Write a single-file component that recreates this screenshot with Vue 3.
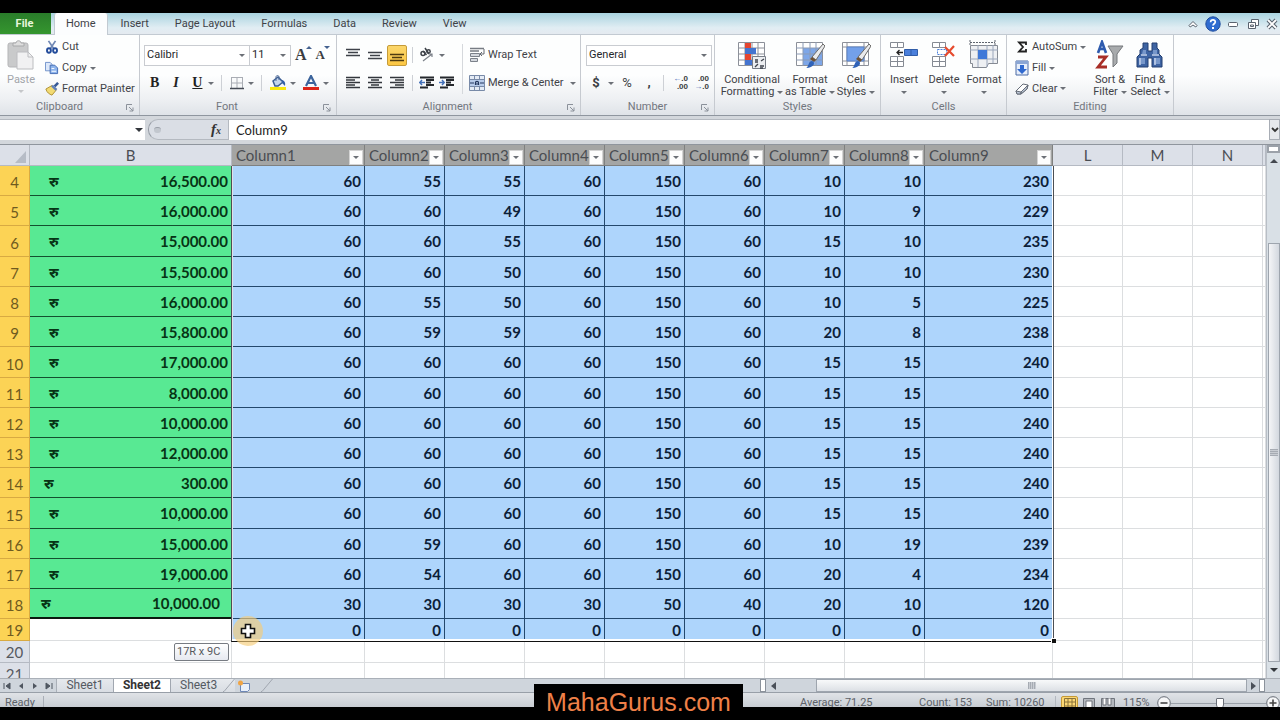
<script setup>
import { ref } from 'vue'

const tabs = ['Home', 'Insert', 'Page Layout', 'Formulas', 'Data', 'Review', 'View']
const tableColumns = [1, 2, 3, 4, 5, 6, 7, 8, 9].map((n) => 'Column' + n)
const emptyColumns = ['L', 'M', 'N']

const rows = [
  { n: 4, amount: '16,500.00', v: [60, 55, 55, 60, 150, 60, 10, 10, 230] },
  { n: 5, amount: '16,000.00', v: [60, 60, 49, 60, 150, 60, 10, 9, 229] },
  { n: 6, amount: '15,000.00', v: [60, 60, 55, 60, 150, 60, 15, 10, 235], tall: true },
  { n: 7, amount: '15,500.00', v: [60, 60, 50, 60, 150, 60, 10, 10, 230] },
  { n: 8, amount: '16,000.00', v: [60, 55, 50, 60, 150, 60, 10, 5, 225] },
  { n: 9, amount: '15,800.00', v: [60, 59, 59, 60, 150, 60, 20, 8, 238] },
  { n: 10, amount: '17,000.00', v: [60, 60, 60, 60, 150, 60, 15, 15, 240], tall: true },
  { n: 11, amount: '8,000.00', v: [60, 60, 60, 60, 150, 60, 15, 15, 240] },
  { n: 12, amount: '10,000.00', v: [60, 60, 60, 60, 150, 60, 15, 15, 240] },
  { n: 13, amount: '12,000.00', v: [60, 60, 60, 60, 150, 60, 15, 15, 240] },
  { n: 14, amount: '300.00', v: [60, 60, 60, 60, 150, 60, 15, 15, 240], money: 'near' },
  { n: 15, amount: '10,000.00', v: [60, 60, 60, 60, 150, 60, 15, 15, 240], tall: true },
  { n: 16, amount: '15,000.00', v: [60, 59, 60, 60, 150, 60, 10, 19, 239] },
  { n: 17, amount: '19,000.00', v: [60, 54, 60, 60, 150, 60, 20, 4, 234] },
  { n: 18, amount: '10,000.00', v: [30, 30, 30, 30, 50, 40, 20, 10, 120], money: 'inset' },
  { n: 19, amount: '', v: [0, 0, 0, 0, 0, 0, 0, 0, 0], short: true },
]

const nameBox = ref('')
const formula = ref('Column9')
const zoom = ref(52)
</script>

<template>
  <div class="screen">
    <div class="window">
      <nav class="tabs">
        <button class="file">File</button>
        <button v-for="(t, i) in tabs" :key="t" class="tab" :class="{ active: i === 0 }">{{ t }}</button>
        <span class="grow"></span>
        <button class="win" aria-label="Minimize ribbon">
          <svg width="12" height="12" viewBox="0 0 12 12"><path d="M2 7.500 6 3.500l4 4-1.200 1.500L6 7 3.200 9z" fill="#fff" stroke="#59636f" /></svg>
        </button>
        <button class="win" aria-label="Help">
          <svg width="16" height="16" viewBox="0 0 16 16"><circle cx="8" cy="8" r="7.200" fill="#2f6cd0" stroke="#1e4c9c" /><path d="M5.600 6.200C5.700 3.200 10.400 3.300 10.300 6 10.200 7.700 8 7.800 8 9.600" fill="none" stroke="#fff" stroke-width="1.700" /><rect x="7" y="11" width="2" height="2" fill="#fff" /></svg>
        </button>
        <button class="win" aria-label="Minimize">
          <svg width="12" height="12" viewBox="0 0 12 12"><rect x="1.500" y="4.500" width="9" height="4" rx="1" fill="#fff" stroke="#59636f" /></svg>
        </button>
        <button class="win" aria-label="Restore">
          <svg width="13" height="12" viewBox="0 0 13 12"><path d="M4.500 1.500h7v6h-7z" fill="#fff" stroke="#59636f" /><path d="M1.500 4.500h7v6h-7z" fill="#fff" stroke="#59636f" /><path d="M3.500 7h3v1.500h-3z" fill="none" stroke="#59636f" /></svg>
        </button>
        <button class="win" aria-label="Close">
          <svg width="12" height="12" viewBox="0 0 12 12"><path d="m2 2 8 8M10 2 2 10" stroke="#59636f" stroke-width="4" /><path d="m2 2 8 8M10 2 2 10" stroke="#fff" stroke-width="1.800" /></svg>
        </button>
      </nav>

      <div class="ribbon">
        <section class="group clipboard">
          <div class="tools">
            <button class="big disabled">
              <svg width="28" height="30" viewBox="0 0 28 30"><rect x="1" y="3" width="20" height="24" rx="2" fill="#c9cacb" stroke="#b4b5b7" /><path d="M6 6V3h3c0-3 5-3 5 0h3v3z" fill="#dedede" stroke="#a7a8aa" /><path d="M10 12h11l5 5v12H10z" fill="#f1f1f2" stroke="#bcbdc0" /><path d="M21 12v5h5" fill="none" stroke="#bcbdc0" /></svg>
              <span>Paste</span><i class="caret"></i>
            </button>
            <div class="stack">
              <button class="small"><svg width="14" height="14" viewBox="0 0 16 16"><path d="M4 1l6 9M12 1 6 10" stroke="#7189b5" stroke-width="2" /><ellipse cx="4.500" cy="12" rx="2.200" ry="2.500" fill="none" stroke="#234c9b" stroke-width="2.200" /><ellipse cx="11.500" cy="12" rx="2.200" ry="2.500" fill="none" stroke="#234c9b" stroke-width="2.200" /></svg>Cut</button>
              <button class="small"><svg width="14" height="14" viewBox="0 0 15 15"><path d="M.5 1.500h5l2 2v7h-7z" fill="#dce8fa" stroke="#6d8fc8" /><path d="M5.500 4.500h5l3 3v6h-8z" fill="#8db4ec" stroke="#3f68b0" /><path d="M7 8h3M7 11h5" stroke="#fff" /></svg>Copy<i class="caret"></i></button>
              <button class="small"><svg width="14" height="14" viewBox="0 0 16 16"><path d="m1 8 7-4 5 5-5 6C5 14 2 12 1 8z" fill="#f2da72" stroke="#a98a2b" /><path d="m7 5 2-2 5 5-2 2z" fill="#5f7fb8" /><path d="m11 5 4-4" stroke="#375996" stroke-width="3" /></svg>Format Painter</button>
            </div>
          </div>
          <footer>Clipboard<svg class="launch" width="8" height="8" viewBox="0 0 8 8"><path d="M.5 6V.5H6M3 3l4 4M7 3.500V7H3.500" fill="none" stroke="#8b919a" /></svg></footer>
        </section>

        <section class="group font">
          <div class="tools rows">
            <div class="line">
              <label class="pick name"><select aria-label="Font"><option>Calibri</option></select><i class="caret"></i></label>
              <label class="pick size"><select aria-label="Font size"><option>11</option></select><i class="caret"></i></label>
              <button class="letter grow-font">A<i class="up"></i></button>
              <button class="letter shrink-font">A<i class="caret blue"></i></button>
            </div>
            <div class="line marks">
              <button class="glyph"><b>B</b></button>
              <button class="glyph"><em>I</em></button>
              <button class="glyph"><u>U</u></button><i class="caret"></i>
              <span class="bar"></span>
              <button class="icon" aria-label="Borders"><svg width="14" height="14" viewBox="0 0 14 14"><path d="M1.500 1v11M12.500 1v11M7 1v11M1 1.500h12M1 7h12" stroke="#a9adb4" /><path d="M0 12.500h14" stroke="#454b55" stroke-width="1.500" /></svg></button><i class="caret"></i>
              <span class="bar"></span>
              <button class="icon" aria-label="Fill color"><svg width="16" height="16" viewBox="0 0 16 16"><path d="m3 6 5-4 5 5-5 4H5z" fill="#c3d5ee" stroke="#3b5e94" stroke-width="1.500" /><path d="M6 6V2c0-2 3-2 3 0v3" fill="none" stroke="#526d97" /><path d="M12 5q4 1 3 6l-3-3z" fill="#3460a6" /><path d="M0 12h16v3H0z" fill="#f8e80e" /></svg></button><i class="caret"></i>
              <button class="icon" aria-label="Font color"><svg width="16" height="16" viewBox="0 0 16 16"><path d="M3 11 8 1l5 10M5 8h6" fill="none" stroke="#3c649c" stroke-width="2.200" /><path d="M0 12h16v3H0z" fill="#dc2418" /></svg></button><i class="caret"></i>
            </div>
          </div>
          <footer>Font<svg class="launch" width="8" height="8" viewBox="0 0 8 8"><path d="M.5 6V.5H6M3 3l4 4M7 3.500V7H3.500" fill="none" stroke="#8b919a" /></svg></footer>
        </section>

        <section class="group align">
          <div class="tools">
            <div class="rows left">
              <div class="line">
                <button class="sq" aria-label="Top align"><svg width="14" height="14" viewBox="0 0 14 14"><path d="M0 1.500h14M2 4.500h10M0 7.500h14" stroke="#3e4249" stroke-width="1.600" /></svg></button>
                <button class="sq" aria-label="Middle align"><svg width="14" height="14" viewBox="0 0 14 14"><path d="M0 4.500h14M2 7.500h10M0 10.500h14" stroke="#3e4249" stroke-width="1.600" /></svg></button>
                <button class="sq on" aria-label="Bottom align"><svg width="14" height="14" viewBox="0 0 14 14"><path d="M0 6.500h14M2 9.500h10M0 12.500h14" stroke="#4f3b10" stroke-width="1.600" /></svg></button>
                <span class="bar"></span>
                <button class="icon" aria-label="Orientation"><svg width="16" height="16" viewBox="0 0 16 16"><g fill="none" stroke="#3e4249" stroke-width="1.500"><circle cx="4" cy="6.500" r="2" /><path d="M4 4l3.500 4M6 1l4 6" /><circle cx="9.500" cy="4.500" r="1.700" /><path d="m4 14 9-7M13 10V7h-3" stroke="#7d828a" stroke-width="1.200" /></g></svg></button><i class="caret"></i>
              </div>
              <div class="line">
                <button class="sq" aria-label="Align left"><svg width="14" height="14" viewBox="0 0 14 14"><path d="M0 1.500h14M0 4h9M0 6.500h14M0 9h9M0 11.500h14" stroke="#33373d" stroke-width="1.500" /></svg></button>
                <button class="sq" aria-label="Center"><svg width="14" height="14" viewBox="0 0 14 14"><path d="M0 1.500h14M3 4h8M0 6.500h14M3 9h8M0 11.500h14" stroke="#33373d" stroke-width="1.500" /></svg></button>
                <button class="sq" aria-label="Align right"><svg width="14" height="14" viewBox="0 0 14 14"><path d="M0 1.500h14M5 4h9M0 6.500h14M5 9h9M0 11.500h14" stroke="#33373d" stroke-width="1.500" /></svg></button>
                <span class="bar"></span>
                <button class="icon" aria-label="Decrease indent"><svg width="16" height="14" viewBox="0 0 16 14"><path d="M1 1.500h14M7 4h8M7 6.500h5M7 9h8M1 11.500h8" stroke="#25282d" stroke-width="1.800" /><path d="M6 6.500H1M3 4 .8 6.500 3 9" fill="none" stroke="#4370b8" stroke-width="1.500" /></svg></button>
                <button class="icon" aria-label="Increase indent"><svg width="16" height="14" viewBox="0 0 16 14"><path d="M1 1.500h14M7 4h8M7 6.500h5M7 9h8M1 11.500h8" stroke="#25282d" stroke-width="1.800" /><path d="M0 6.500h5M3 4l2.200 2.500L3 9" fill="none" stroke="#4370b8" stroke-width="1.500" /></svg></button>
              </div>
            </div>
            <div class="rows right">
              <button class="small line"><svg width="16" height="16" viewBox="0 0 16 16"><path d="M1 1.500h14M1 4h9" stroke="#777c84" stroke-width="1.500" /><path d="M1.500 6.500h9v3h-9zM1.500 11.500h7v3h-7z" fill="#d4d8de" stroke="#7b818a" /><path d="M15 2v5h-4M13 5l-2 2 2 2" fill="none" stroke="#62676f" /></svg>Wrap Text</button>
              <button class="small line"><svg width="16" height="16" viewBox="0 0 16 16"><path d="M.5.500h15v15H.5z" fill="#e4ebf5" stroke="#788aa8" /><path d="M.5 4.500h15M.5 11.500h15M5.500 0v5M10.500 0v5M5.500 11v5M10.500 11v5" stroke="#788aa8" /><path d="M1 5h14v6H1z" fill="#b7cbea" /><path d="M1 8h4M11 8h4M6.500 10V7.500C6.500 6 9.500 6 9.500 7.500V10M6.500 9h3" fill="none" stroke="#23375e" stroke-width="1.200" /></svg>Merge &amp; Center<i class="caret"></i></button>
            </div>
          </div>
          <footer>Alignment<svg class="launch" width="8" height="8" viewBox="0 0 8 8"><path d="M.5 6V.5H6M3 3l4 4M7 3.500V7H3.500" fill="none" stroke="#8b919a" /></svg></footer>
        </section>

        <section class="group number">
          <div class="tools rows">
            <div class="line"><label class="pick wide"><select aria-label="Number format"><option>General</option></select><i class="caret"></i></label></div>
            <div class="line">
              <button class="sign"><b>$</b></button><i class="caret"></i>
              <button class="sign">%</button>
              <button class="sign comma"><b>,</b></button>
              <span class="bar"></span>
              <button class="decimals"><span><i>←</i>.0</span><span>.00</span></button>
              <button class="decimals"><span>.00</span><span><i>→</i>.0</span></button>
            </div>
          </div>
          <footer>Number<svg class="launch" width="8" height="8" viewBox="0 0 8 8"><path d="M.5 6V.5H6M3 3l4 4M7 3.500V7H3.500" fill="none" stroke="#8b919a" /></svg></footer>
        </section>

        <section class="group styles">
          <div class="tools">
            <button class="big">
              <svg width="30" height="30" viewBox="0 0 30 30"><path d="M1.500 2.500h26v23h-26z" fill="#fff" stroke="#8c9099" /><path d="M1 8h27M1 14h27M1 20h27M8 2v24M15 2v24M21 2v24" stroke="#8c9099" /><path d="M8 3h6v5H8zM8 14h6v6H8z" fill="#e5452f" /><path d="M8 8h11v6H8zM8 20h9v5H8z" fill="#4474cf" /><path d="M15.500 16.500h13v12h-13z" fill="#eceef1" stroke="#777d87" /><path d="M18 20h3M18 22h3M23 26h4M23 28h3M24 21l3-2M18 27l3-3" stroke="#3e434c" stroke-width="1.300" /></svg>
              <span>Conditional</span><span>Formatting<i class="caret"></i></span>
            </button>
            <button class="big">
              <svg width="30" height="30" viewBox="0 0 30 30"><path d="M1.500 2.500h26v23h-26z" fill="#fff" stroke="#8c9099" /><path d="M8 8h19v17H8z" fill="#7da6e8" /><path d="M1 8h27M1 14h27M1 20h27M8 2v24M15 2v24M21 2v24" stroke="#8c9bb4" /><path d="m28 4 2 2-9 14-4-3z" fill="#e9eaec" stroke="#6b6a68" /><path d="m17 17 4 3-2 2-4-3z" fill="#6f5132" /><path d="M11 28c3-1 2-7 6-7 4 1 2 7-6 7z" fill="#2f62b8" /></svg>
              <span>Format</span><span>as Table<i class="caret"></i></span>
            </button>
            <button class="big">
              <svg width="30" height="30" viewBox="0 0 30 30"><path d="M1.500 2.500h26v23h-26z" fill="#fff" stroke="#8c9099" /><path d="M1 7h27M1 21h27M6 2v24M23 2v24" stroke="#8c9099" /><path d="M6 7h17v14H6z" fill="#73a0ea" stroke="#5c83c6" /><path d="m28 4 2 2-9 14-4-3z" fill="#e9eaec" stroke="#6b6a68" /><path d="m17 17 4 3-2 2-4-3z" fill="#6f5132" /><path d="M11 28c3-1 2-7 6-7 4 1 2 7-6 7z" fill="#2f62b8" /></svg>
              <span>Cell</span><span>Styles<i class="caret"></i></span>
            </button>
          </div>
          <footer>Styles</footer>
        </section>

        <section class="group cells">
          <div class="tools">
            <button class="big">
              <svg width="30" height="30" viewBox="0 0 30 30"><g fill="#fff" stroke="#858a93"><path d="M1.500 2.500h7v5h-7zM8.500 2.500h6v5h-6zM1.500 16.500h7v5h-7zM8.500 16.500h6v5h-6zM1.500 21.500h7v5h-7zM8.500 21.500h6v5h-6z" /></g><path d="M15.500 9.500h13v6h-13z" fill="#4b80dc" stroke="#315da8" /><path d="M22 9v7" stroke="#315da8" /><path d="M14 12.500H8M10.500 10 8 12.500l2.500 2.500" fill="none" stroke="#222" stroke-width="1.300" /></svg>
              <span>Insert</span><span><i class="caret"></i></span>
            </button>
            <button class="big">
              <svg width="30" height="30" viewBox="0 0 30 30"><g fill="#fff" stroke="#858a93"><path d="M3.500 2.500h7v5h-7zM10.500 2.500h6v5h-6zM3.500 16.500h7v5h-7zM10.500 16.500h6v5h-6zM3.500 21.500h7v5h-7zM10.500 21.500h6v5h-6z" /></g><path d="M8.500 9.500h9v5h-9z" fill="none" stroke="#4b80dc" stroke-dasharray="2 1" /><path d="m16 7 9 9M25 6l-9 10" stroke="#e64b2e" stroke-width="2.200" /></svg>
              <span>Delete</span><span><i class="caret"></i></span>
            </button>
            <button class="big">
              <svg width="30" height="30" viewBox="0 0 30 30"><path d="M1 2.500h25M1 0v5M26 0v5" stroke="#5f656f" stroke-dasharray="2 1" /><path d="M1.500 5.500h27v18h-9l-2 4h-14v-4h-2z" fill="#eef0f3" stroke="#858a93" /><path d="M1 10h28M1 19h28M9 5v22M18 5v22M24 5v18" stroke="#9aa6bb" /><path d="M9 10h9v9H9z" fill="#3f78d8" /></svg>
              <span>Format</span><span><i class="caret"></i></span>
            </button>
          </div>
          <footer>Cells</footer>
        </section>

        <section class="group editing">
          <div class="tools">
            <div class="stack">
              <button class="small"><svg width="14" height="14" viewBox="0 0 14 14"><path d="M11 5V2.500H4L8 7l-4 4.500h7V9" fill="none" stroke="#222" stroke-width="1.800" /></svg>AutoSum<i class="caret"></i></button>
              <button class="small"><svg width="14" height="16" viewBox="0 0 14 16"><path d="M1 1h12v14H1z" fill="#e7eefa" stroke="#4a6aa5" /><path d="M1 1h12v3H1z" fill="#8ba6d4" /><path d="M5 5h4v4h3l-5 5-5-5h3z" fill="#2f69cf" /></svg>Fill<i class="caret"></i></button>
              <button class="small"><svg width="14" height="14" viewBox="0 0 14 14"><path d="m1 9 7-7 5 1-1 4-6 5H2z" fill="#fff" stroke="#666d78" /><path d="m1 9 5 1v2H2zM6 10l7-7-1 4-6 5z" fill="#bcc6d6" stroke="#666d78" /></svg>Clear<i class="caret"></i></button>
            </div>
            <button class="big">
              <svg width="30" height="30" viewBox="0 0 30 30"><path d="M13 6h15l-6 8v9l-4 4V14z" fill="#a8abad" stroke="#75787c" /><path d="m3 13 4-11 4 11M4 9h6" fill="none" stroke="#2e5bae" stroke-width="2.600" /><path d="M3 17h8L3 27h9" fill="none" stroke="#a82e27" stroke-width="2.800" /></svg>
              <span>Sort &amp;</span><span>Filter<i class="caret"></i></span>
            </button>
            <button class="big">
              <svg width="30" height="30" viewBox="0 0 30 30"><path d="M8 3h5v8h4V3h5v5l2 2v4l3 3v10H17v-9h-4v9H2V17l3-3v-4l3-2z" fill="#3e64a3" stroke="#233f70" /><path d="M4 18h6v6H4zM19 18h6v6h-6zM8 10h3v4H7zM18 10h4v4h-4z" fill="#7797ca" /><path d="M6 15h6M17 15h7M5 18v7M20 18v7" stroke="#c3d1ea" stroke-width="1.500" /></svg>
              <span>Find &amp;</span><span>Select<i class="caret"></i></span>
            </button>
          </div>
          <footer>Editing</footer>
        </section>
      </div>

      <div class="formula-bar">
        <label class="namebox"><input v-model="nameBox" aria-label="Name box" /><i class="caret dark"></i></label>
        <div class="fx"><span class="knob"></span><em>f<small>x</small></em></div>
        <input v-model="formula" class="formula" aria-label="Formula" />
        <button class="expand" aria-label="Expand formula bar"><svg width="8" height="6" viewBox="0 0 8 6"><path d="m1 1 3 3 3-3" fill="none" stroke="#333" stroke-width="1.800" /></svg></button>
      </div>

      <div class="work">
        <div class="sheet">
          <table>
            <colgroup>
              <col class="c-head" /><col class="c-b" /><col class="c-first" />
              <col v-for="n in 7" :key="n" class="c-mid" />
              <col class="c-last" /><col v-for="n in 3" :key="'e' + n" class="c-empty" /><col />
            </colgroup>
            <thead>
              <tr>
                <th class="corner"><svg width="11" height="12" viewBox="0 0 11 12"><path d="M11 0v12H0z" fill="#b6bcc6" /></svg></th>
                <th>B</th>
                <th v-for="c in tableColumns" :key="c" class="filtered"><div><span>{{ c }}</span><button :aria-label="'Filter ' + c"><i class="caret"></i></button></div></th>
                <th v-for="c in emptyColumns" :key="c">{{ c }}</th>
                <th></th>
              </tr>
            </thead>
            <tbody>
              <tr v-for="r in rows" :key="r.n" :class="{ tall: r.tall, short: r.short }">
                <th class="picked">{{ r.n }}</th>
                <td v-if="r.amount" class="money" :class="r.money"><div><span>रु</span><span>{{ r.amount }}</span></div></td>
                <td v-else class="blank"></td>
                <td v-for="(v, i) in r.v" :key="i" class="num">{{ v }}</td>
                <td v-for="n in 4" :key="'x' + n"></td>
              </tr>
              <tr v-for="n in [20, 21]" :key="n" class="short">
                <th>{{ n }}</th><td v-for="k in 14" :key="k"></td>
              </tr>
            </tbody>
          </table>
          <div class="selection"><span class="handle"></span></div>
          <div class="cursor">
            <svg width="18" height="18" viewBox="0 0 18 18"><path d="M6.500 2.500h5v4h4v5h-4v4h-5v-4h-4v-5h4z" fill="#fff" stroke="#111" stroke-width="1.600" /></svg>
          </div>
          <div class="tip">17R x 9C</div>
        </div>
        <div class="vscroll">
          <span class="split"></span>
          <button aria-label="Scroll up"><i class="up dark"></i></button>
          <span class="track"></span>
          <span class="thumb"><span class="grip"></span></span>
          <button aria-label="Scroll down"><i class="caret dark"></i></button>
        </div>
      </div>

      <div class="bottom">
        <div class="arrows">
          <button aria-label="First sheet"><svg width="8" height="8" viewBox="0 0 8 8"><path d="M1 1v6M7 1v6L3 4z" fill="#4f5660" stroke="#4f5660" /></svg></button>
          <button aria-label="Previous sheet"><svg width="8" height="8" viewBox="0 0 8 8"><path d="M6 1v6L2 4z" fill="#4f5660" /></svg></button>
          <button aria-label="Next sheet"><svg width="8" height="8" viewBox="0 0 8 8"><path d="M2 1v6l4-3z" fill="#4f5660" /></svg></button>
          <button aria-label="Last sheet"><svg width="8" height="8" viewBox="0 0 8 8"><path d="M7 1v6M1 1v6l4-3z" fill="#4f5660" stroke="#4f5660" /></svg></button>
        </div>
        <button class="sheet-tab">Sheet1</button>
        <button class="sheet-tab current">Sheet2</button>
        <button class="sheet-tab slanted">Sheet3<svg width="12" height="13" viewBox="0 0 12 13"><path d="M0 12.500h1L11.500 0" fill="none" stroke="#a1a7b0" /></svg></button>
        <button class="sheet-tab slanted new" aria-label="Insert worksheet"><svg width="14" height="12" viewBox="0 0 14 12"><path d="M3.500 3.500h9v6l-2 2h-7z" fill="#e8effa" stroke="#6d87b6" /><circle cx="3.500" cy="3" r="2.500" fill="#f0a444" /></svg><svg width="12" height="13" viewBox="0 0 12 13"><path d="M0 12.500h1L11.500 0" fill="none" stroke="#a1a7b0" /></svg></button>
        <span class="grow"></span>
        <div class="hscroll">
          <span class="pin"></span>
          <button aria-label="Scroll left"><svg width="8" height="8" viewBox="0 0 8 8"><path d="M6 0v8L1 4z" fill="#4a5059" /></svg></button>
          <span class="thumb"><span class="grip"></span></span>
          <button aria-label="Scroll right"><svg width="8" height="8" viewBox="0 0 8 8"><path d="M2 0v8l5-4z" fill="#4a5059" /></svg></button>
          <span class="pin"></span>
        </div>
      </div>

      <div class="status">
        <span class="ready">Ready</span>
        <span class="grow"></span>
        <span class="stat average">Average: 71.25</span>
        <span class="stat count">Count: 153</span>
        <span class="stat sum">Sum: 10260</span>
        <div class="views">
          <button class="on" aria-label="Normal view"><svg width="12" height="12" viewBox="0 0 12 12"><path d="M.5.500h11v11H.5zM4 0v12M8 0v12M0 4h12M0 8h12" fill="none" stroke="#8a733a" /></svg></button>
          <button aria-label="Page layout view"><svg width="12" height="12" viewBox="0 0 12 12"><path d="M.5.500h11v11H.5z" fill="#b3b7bd" stroke="#70757d" /><path d="M3 3h6v9H3z" fill="#fff" stroke="#70757d" /></svg></button>
          <button aria-label="Page break preview"><svg width="14" height="12" viewBox="0 0 14 12"><path d="M.5.500h13v11H.5z" fill="#b3b7bd" stroke="#70757d" /><path d="M2 0h3v7H2zM7 0h3v7H7z" fill="#fff" stroke="#70757d" /></svg></button>
        </div>
        <span class="percent">115%</span>
        <button class="round" aria-label="Zoom out"><svg width="14" height="14" viewBox="0 0 14 14"><circle cx="7" cy="7" r="6.300" fill="#f5f6f7" stroke="#666c75" /><path d="M3.500 7h7" stroke="#444" stroke-width="1.600" /></svg></button>
        <input v-model="zoom" type="range" aria-label="Zoom" />
        <button class="round" aria-label="Zoom in"><svg width="14" height="14" viewBox="0 0 14 14"><circle cx="7" cy="7" r="6.300" fill="#f5f6f7" stroke="#666c75" /><path d="M3.500 7h7M7 3.500v7" stroke="#444" stroke-width="1.600" /></svg></button>
      </div>
    </div>
    <div class="watermark">MahaGurus.com</div>
  </div>
</template>

<style>
body { background: #000; }
</style>

<style scoped>
.screen { position: relative; display: flex; flex-direction: column; box-sizing: border-box; height: 100vh; padding: 13px 0; overflow: hidden; background: #000; font: 11px/12px Roboto, "Open Sans", sans-serif; color: #3f4247; }
.screen * { box-sizing: border-box; }
.window { display: flex; flex-direction: column; flex: 1; min-height: 0; background: #dfe3e8; overflow: hidden; }
button { display: inline-flex; align-items: center; justify-content: center; margin: 0; padding: 0; border: 0; background: none; font: inherit; color: inherit; white-space: nowrap; }
input, select { margin: 0; padding: 0; border: 0; border-radius: 0; background: none; font: inherit; color: inherit; outline: 0; min-width: 0; }
svg { flex: none; display: block; }
.grow { flex: 1; }
.caret { flex: none; display: inline-block; border: 3px solid transparent; border-top-color: #6c7077; border-bottom: 0; }
.caret.dark { border-width: 4px 4px 0; border-top-color: #33373c; }
.caret.blue { border-top-color: #44618f; }
.up { display: inline-block; border: 3px solid transparent; border-top: 0; border-bottom-color: #44618f; }
.up.dark { border-width: 0 4px 4px; border-bottom-color: #44484f; }

.tabs { display: flex; height: 22px; flex: none; background: linear-gradient(#a9d3df, rgba(226, 238, 244, .9) 70%, #e4eaf0), #d5e6ee; border-bottom: 1px solid #c2cad2; }
.file { width: 51px; margin-right: 3px; padding-right: 2px; background: linear-gradient(#2a7d2a, #35962f); color: #e8f7dc; font-weight: bold; }
.tab { padding: 0 13px; }
.tab.active { height: 22px; padding: 0 11px; background: #fcfdfe; border: 1px solid #c2cad2; border-width: 0 1px; border-radius: 3px 3px 0 0; }
.win { width: 20px; }
.win:last-child { width: 17px; }

.ribbon { display: flex; flex: none; height: 81px; background: linear-gradient(#fdfefe 50%, #eef0f3 80%, #dfe3e8); border-bottom: 1px solid #8f969f; }
.group { display: flex; flex-direction: column; flex: none; border-right: 1px solid #c6cad0; }
.tools { display: flex; flex: 1; min-height: 0; }
.group footer { position: relative; flex: none; height: 16px; padding-right: 22px; line-height: 15px; text-align: center; color: #72767e; }
.styles footer, .cells footer, .editing footer { padding-right: 0; }
.launch { position: absolute; right: 5px; top: 5px; }
.clipboard { width: 140px; }
.font { width: 197px; }
.align { width: 244px; }
.number { width: 134px; }
.styles { width: 166px; }
.cells { width: 126px; }
.editing { width: 167px; }
.big { flex-direction: column; justify-content: flex-start; flex: none; width: 40px; padding-top: 5px; line-height: 12px; }
.big > svg { margin-bottom: 4px; }
.big > span { display: flex; align-items: center; gap: 3px; height: 12px; }
.disabled { color: #a2a5aa; }
.disabled .caret { border-top-color: #c5c7ca; margin-top: 4px; }
.clipboard .tools { padding-left: 1px; }
.clipboard footer { padding-right: 20px; }
.clipboard .stack { padding-left: 4px; }
.stack { display: flex; flex-direction: column; align-items: flex-start; padding-top: 2px; }
.stack .small { height: 21px; }
.small { gap: 3px; justify-content: flex-start; }
.rows { display: flex; flex-direction: column; justify-content: flex-start; gap: 6px; padding-top: 9px; }
.line { display: flex; align-items: center; flex: none; height: 22px; }
.bar { width: 1px; height: 16px; background: #cdd0d5; }

.pick { display: flex; align-items: center; height: 21px; padding-right: 4px; background: #fff; border: 1px solid #c9ccd1; }
.pick select { flex: 1; appearance: none; padding-left: 2px; height: 19px; color: #26282b; }
.pick.name { width: 106px; }
.pick.size { width: 42px; margin-left: -1px; }
.pick.wide { width: 126px; }
.font .tools { padding-left: 4px; }
.letter { font: bold 16px/18px "Liberation Serif", serif; color: #3a3d42; align-items: center; }
.grow-font { margin-left: 4px; }
.shrink-font { font-size: 13px; margin-left: 4px; }
.letter .up, .letter .caret { align-self: flex-start; margin-left: -1px; }
.marks .caret { margin-right: 7px; }
.marks .bar { margin-right: 8px; }
.marks .icon { margin-right: 4px; }
.glyph { width: 22px; font: 14px/16px "Liberation Serif", serif; color: #222; }
.glyph em, .glyph u { font-weight: bold; }

.left { width: 125px; padding-left: 6px; }
.right { padding-left: 6px; border-left: 1px solid #d5d8dc; margin: 9px 0 5px; padding-top: 0; }
.sq { width: 20px; height: 21px; margin-right: 2px; }
.sq.on { background: linear-gradient(#fbd66b, #fcc743); border: 1px solid #c59b39; border-radius: 2px; }
.left .bar { margin: 0 6px 0 3px; }
.left .icon { margin-right: 4px; }
.right .caret { margin-left: 3px; }

.number .tools { padding-left: 5px; }
.number footer { padding-right: 0; }
.sign { width: 20px; font-size: 13px; color: #3a3d42; }
.sign + .caret { margin: 0 3px 0 2px; }
.comma { margin: 0 4px 0 2px; }
.number .bar { margin-right: 8px; }
.decimals { flex-direction: column; align-items: flex-end; width: 16px; margin-right: 5px; font: bold 8px/8px "Liberation Sans", sans-serif; color: #3a3d42; }
.decimals i { color: #3b67b5; font-style: normal; }
.styles .tools { padding-left: 5px; }
.styles .big:nth-child(1) { width: 64px; }
.styles .big:nth-child(2) { width: 52px; }
.cells .tools { padding-left: 3px; }
.editing .tools { padding-left: 8px; }
.editing .stack { width: 75px; }

.formula-bar { display: flex; flex: none; height: 28px; padding: 3px 0 4px; background: #d3d7dc; }
.namebox { display: flex; align-items: center; width: 145px; background: #fff; padding-right: 2px; border-top: 1px solid #b4b9c0; }
.namebox input { flex: 1; }
.fx { display: flex; align-items: center; justify-content: space-between; width: 81px; margin-left: 3px; padding: 0 7px 0 5px; border: 1px solid #b4b9c0; border-left-color: #969ca5; border-radius: 10px 0 0 10px; background: #dadee5; font: bold 15px/18px "Liberation Serif", serif; color: #333; }
.fx small { font-size: 10px; }
.knob { width: 7px; height: 6px; border-radius: 4px; background: #c2c7ce; border-top: 1px solid #9aa0a9; }
.formula { flex: 1; padding-left: 7px; background: #fff; border-top: 1px solid #b4b9c0; font: 13px/18px Lato, sans-serif; color: #222; }
.expand { width: 11px; border: 1px solid #a8adb5; background: #e6e8ec; }

.work { display: flex; flex: 1; min-height: 0; border-top: 1px solid #8f959d; }
.sheet { position: relative; flex: 1; min-width: 0; overflow: hidden; background: #fff; }
table { width: 100%; table-layout: fixed; border-collapse: separate; border-spacing: 0; font: 15px/20px Lato, "Noto Sans", sans-serif; color: #4a4d52; }
.c-head { width: 30px; }
.c-b { width: 202px; }
.c-first { width: 133px; }
.c-mid { width: 80px; }
.c-last { width: 128px; }
.c-empty { width: 70px; }
th, td { padding: 0; border: 1px solid #dcdee0; border-width: 0 1px 1px 0; height: 30px; overflow: hidden; }
th { font-weight: normal; background: #dce0e8; border-color: #b5bac3; }
thead th { height: 21px; line-height: 20px; }
.corner svg { margin: 3px 3px 0 auto; }
.filtered { background: #a4a5a4; border-color: #7f807f; }
.filtered div { display: flex; align-items: flex-end; justify-content: space-between; height: 20px; padding: 0 1px 0 4px; }
.filtered button { width: 14px; height: 15px; background: #fdfdfd; border: 1px solid #d4d4d4; }
.tall th, .tall td { height: 31px; }
.short th, .short td { height: 22px; }
tbody th { padding-top: 3px; color: #555960; }
tbody th.picked { background: #fcd355; border-color: #d8aa42; color: #6f5a20; }
.short th { padding-top: 0; }
.num { background: #aed5fc; border-color: #24486c; color: #0c2038; font-weight: bold; text-align: right; padding-right: 3px; }
.money { background: #58e993; border-color: #14502f; color: #073315; font-weight: bold; }
.money div { display: flex; justify-content: space-between; padding: 0 3px 0 19px; }
.money.near div { padding-left: 14px; }
.money.inset div { padding: 0 11px; }
.money.inset { border-bottom: 2px solid #0a1a10; }
.selection { position: absolute; left: 231px; top: 21px; width: 823px; height: 476px; border: 1px solid #4c4f54; border-top: 0; border-bottom-color: #111; box-shadow: inset -1px -2px #fff, inset 1px 0 #e4dfea; }
.handle { position: absolute; right: -3px; bottom: -2px; width: 5px; height: 5px; background: #111; border: 1px solid #fff; border-width: 1px 0 0 1px; }
.cursor { position: absolute; left: 233px; top: 471px; display: grid; place-items: center; width: 30px; height: 30px; border-radius: 50%; background: rgba(246, 205, 120, .65); }
.tip { position: absolute; left: 174px; top: 498px; width: 55px; height: 18px; padding-left: 2px; border: 1px solid #777b82; border-radius: 2px; background: linear-gradient(#fff, #e6e9f0); font-size: 11px; line-height: 16px; color: #55585d; white-space: nowrap; }

.vscroll { display: flex; flex-direction: column; align-items: center; flex: none; width: 14px; background: #d9e0e6; border-left: 1px solid #b8bec6; }
.split { width: 13px; height: 8px; border: 2px solid #9ba1a9; background: #fff; }
.vscroll button { height: 16px; width: 13px; }
.track { height: 74px; }
.vscroll .thumb { flex: 1; display: grid; place-items: center; width: 12px; border: 1px solid #9ea5ae; background: linear-gradient(90deg, #f4f5f7, #d3d8df); }
.grip { width: 8px; height: 7px; background: repeating-linear-gradient(#a6abb3 0 1px, #c8ccd2 1px 2px); }

.bottom { display: flex; flex: none; height: 15px; background: #cfd5dc; border-top: 1px solid #aab0b8; border-bottom: 1px solid #989fa8; }
.arrows { display: flex; align-items: center; width: 57px; border-right: 1px solid #aab0b8; }
.arrows button { width: 14px; }
.sheet-tab { width: 57px; background: linear-gradient(#e6e9ed, #d9dde3); color: #555a62; font-size: 12px; line-height: 13px; border-right: 1px solid #a1a7b0; }
.sheet-tab.current { background: #fff; color: #333; font-weight: bold; }
.sheet-tab.slanted { justify-content: space-between; width: 64px; padding-left: 9px; border-right: 0; }
.sheet-tab.new { width: 38px; padding-left: 2px; background: #cfd5dc; }
.hscroll { display: flex; align-items: center; flex: 0 0 520px; padding-right: 15px; }
.hscroll button { width: 12px; height: 13px; }
.pin { width: 6px; height: 13px; border: 1px solid #8b929b; background: #fff; }
.hscroll .pin:first-child { margin-right: 2px; }
.hscroll .thumb { flex: 1; display: grid; place-items: center; height: 13px; margin-left: 36px; border: 1px solid #9ea5ae; background: linear-gradient(#f8f9fa, #dce0e5); }
.hscroll .grip { background: repeating-linear-gradient(90deg, #a6abb3 0 1px, #c8ccd2 1px 2px); }

.status { display: flex; align-items: flex-start; flex: none; height: 14px; padding-top: 3px; overflow: hidden; background: linear-gradient(#e0e3e7, #c8cdd3); line-height: 14px; color: #5d6269; }
.status .ready { width: 44px; padding-left: 5px; border-right: 1px solid #a9aeb6; }
.stat { flex: none; white-space: nowrap; }
.average { width: 119px; }
.count { width: 67px; }
.sum { width: 70px; border-right: 1px solid #b3b8bf; }
.views { display: flex; width: 67px; padding-left: 5px; gap: 2px; }
.views button { width: 17px; height: 16px; }
.views .on { background: #fbd775; border: 1px solid #c69a35; border-radius: 2px; }
.percent { width: 34px; }
.round { width: 14px; height: 14px; }
.status input { appearance: none; width: 95px; height: 14px; background: linear-gradient(#9ba1a9, #9ba1a9) center / 100% 1px no-repeat; }
.status input::-webkit-slider-thumb { appearance: none; width: 8px; height: 11px; border: 1px solid #6b7079; border-radius: 1px 1px 4px 4px; background: #fff; }

.watermark { position: absolute; left: 50%; bottom: 0; width: 209px; height: 36px; margin-left: -106px; background: #000; color: #ef8048; font: 25px/36px "Liberation Sans", Arial, sans-serif; text-align: center; }
</style>
